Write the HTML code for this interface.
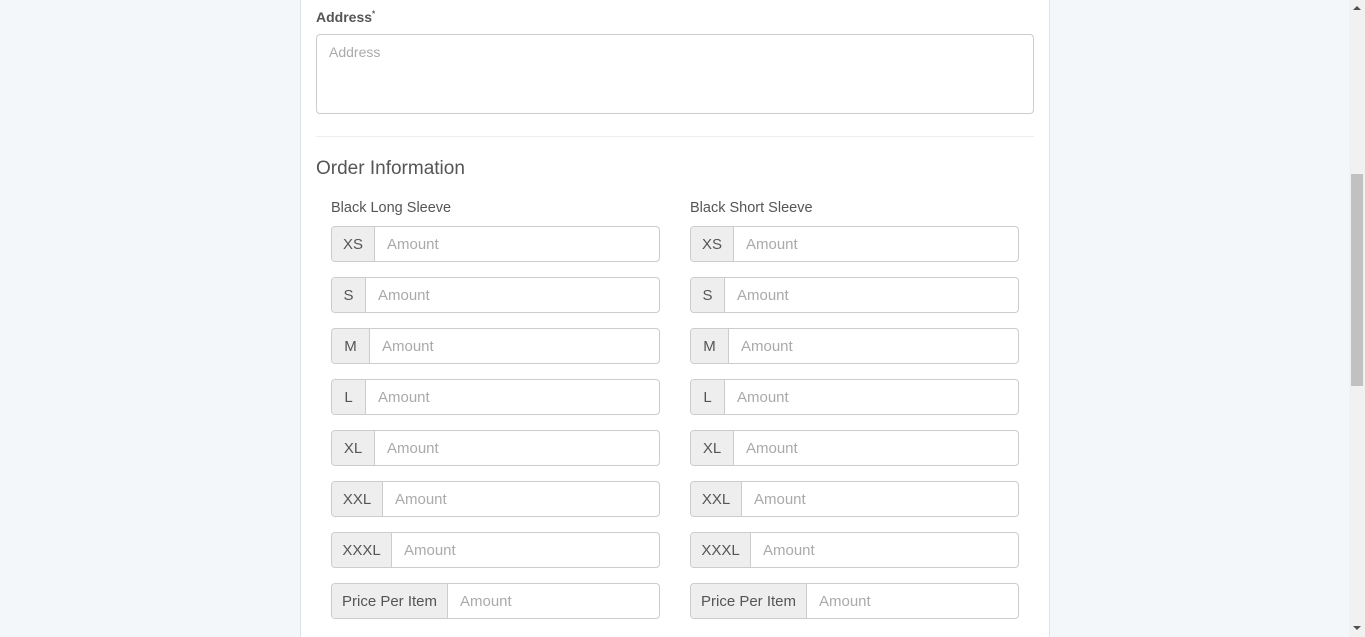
<!DOCTYPE html>
<html><head><style>
html,body{margin:0;width:1365px;height:637px;overflow:hidden}
body{background:#f4f7fa;font-family:"Liberation Sans",sans-serif;position:relative}
.card{position:absolute;left:300px;top:-5px;width:748px;height:642px;background:#fff;border-left:1px solid #dde3ea;border-right:1px solid #dde3ea}
.lbl{position:absolute;left:15px;top:14px;font-size:14px;font-weight:bold;color:#555}
.ta{position:absolute;left:15px;top:39px;width:718px;height:80px;border:1px solid #ccc;border-radius:4px;box-sizing:border-box;font-size:14px;color:#aaa;padding:9px 12px}
.hr{position:absolute;left:15px;top:141px;width:718px;border-top:1px solid #eee}
h3{position:absolute;left:15px;top:163px;margin:0;font-size:19px;font-weight:normal;color:#555}
.col{position:absolute;top:205px;width:329px}
.col .t{font-size:14.5px;color:#555;height:26px}
.ig{display:flex;height:36px;box-sizing:border-box;border:1px solid #ccc;border-radius:4px;margin-bottom:15px;font-size:15px;overflow:hidden}
.ig .a{background:#eee;border-right:1px solid #ccc;color:#555;display:flex;align-items:center;justify-content:center}
.ig .i{flex:1;color:#aaa;display:flex;align-items:center;padding-left:12px}
.sb{position:absolute;left:1349px;top:0;width:16px;height:637px;background:#f1f1f1}
.th{position:absolute;left:1351px;top:174px;width:12px;height:212px;background:#c1c1c1}
</style></head><body>
<div class="card">
<div class="lbl">Address<sup style="font-size:8px">*</sup></div>
<div class="ta">Address</div>
<div class="hr"></div>
<h3>Order Information</h3>
<div class="col" style="left:30px">
<div class="t">Black Long Sleeve</div>
<div class="ig"><div class="a" style="width:42px">XS</div><div class="i">Amount</div></div>
<div class="ig"><div class="a" style="width:33px">S</div><div class="i">Amount</div></div>
<div class="ig"><div class="a" style="width:37px">M</div><div class="i">Amount</div></div>
<div class="ig"><div class="a" style="width:33px">L</div><div class="i">Amount</div></div>
<div class="ig"><div class="a" style="width:42px">XL</div><div class="i">Amount</div></div>
<div class="ig"><div class="a" style="width:50px">XXL</div><div class="i">Amount</div></div>
<div class="ig"><div class="a" style="width:59px">XXXL</div><div class="i">Amount</div></div>
<div class="ig"><div class="a" style="width:115px">Price Per Item</div><div class="i">Amount</div></div>
</div>
<div class="col" style="left:389px">
<div class="t">Black Short Sleeve</div>
<div class="ig"><div class="a" style="width:42px">XS</div><div class="i">Amount</div></div>
<div class="ig"><div class="a" style="width:33px">S</div><div class="i">Amount</div></div>
<div class="ig"><div class="a" style="width:37px">M</div><div class="i">Amount</div></div>
<div class="ig"><div class="a" style="width:33px">L</div><div class="i">Amount</div></div>
<div class="ig"><div class="a" style="width:42px">XL</div><div class="i">Amount</div></div>
<div class="ig"><div class="a" style="width:50px">XXL</div><div class="i">Amount</div></div>
<div class="ig"><div class="a" style="width:59px">XXXL</div><div class="i">Amount</div></div>
<div class="ig"><div class="a" style="width:115px">Price Per Item</div><div class="i">Amount</div></div>
</div>
</div>
<div class="sb"></div><div class="th"></div>
<div style="position:absolute;left:1353px;top:6px;border:4px solid transparent;border-bottom:4px solid #505050;border-top:0"></div>
<div style="position:absolute;left:1353px;top:626px;border:4px solid transparent;border-top:4px solid #505050;border-bottom:0"></div>
</body></html>
